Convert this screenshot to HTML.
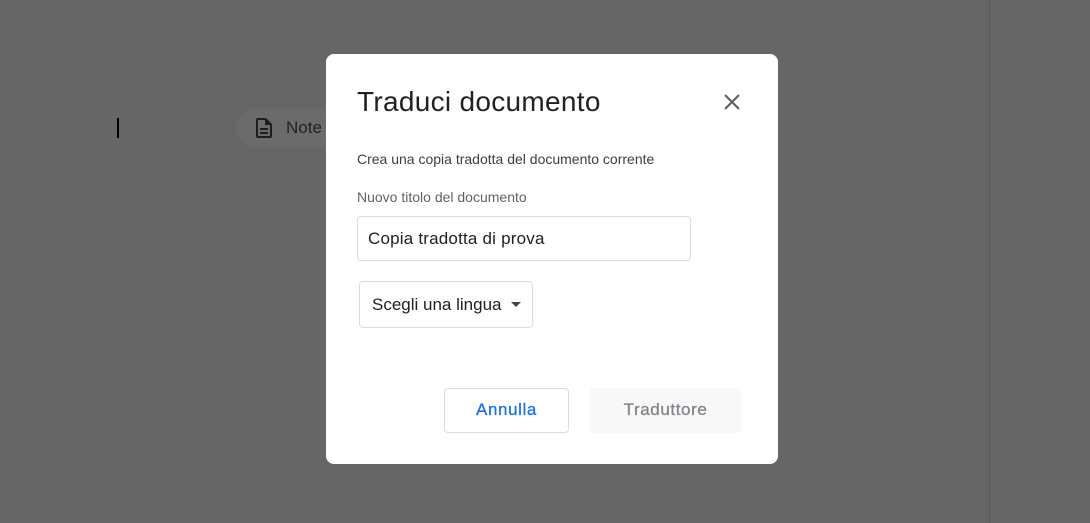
<!DOCTYPE html>
<html><head><style>
body{margin:0;width:1090px;height:523px;background:#666;position:relative;overflow:hidden;font-family:"Liberation Sans",Arial,sans-serif}
.a{position:absolute}
</style></head><body>
<div class="a" style="left:989px;top:0;width:1px;height:523px;background:#5a5a5a"></div>
<div class="a" style="left:117px;top:118px;width:2px;height:20px;background:#000"></div>
<div class="a" style="left:236px;top:108px;width:120px;height:40px;border-radius:20px;background:#6b6b6b"></div>
<svg class="a" style="left:252px;top:116px" width="24" height="24" viewBox="0 0 24 24"><path d="M14 2H6c-1.1 0-2 .9-2 2v16c0 1.1.9 2 2 2h12c1.1 0 2-.9 2-2V8l-6-6zm4 18H6V4h7v5h5v11zM8 12h8v2H8zm0 4h8v2H8z" fill="#1e1e1e"/></svg>
<div class="a" style="left:286px;top:118px;font-size:17px;color:#222">Note</div>
<div class="a" style="left:326px;top:54px;width:452px;height:410px;background:#fff;border-radius:8px"></div>
<div class="a" style="left:357px;top:86px;font-size:28px;letter-spacing:0.3px;color:#202124">Traduci documento</div>
<svg class="a" style="left:720px;top:90px" width="24" height="24" viewBox="0 0 24 24"><path d="M5 5L19 19M19 5L5 19" stroke="#5f6368" stroke-width="2.2"/></svg>
<div class="a" style="left:357px;top:151px;font-size:14px;color:#3c4043">Crea una copia tradotta del documento corrente</div>
<div class="a" style="left:357px;top:189px;font-size:14px;color:#5f6368">Nuovo titolo del documento</div>
<div class="a" style="left:357px;top:216px;width:332px;height:43px;border:1px solid #dadce0;border-radius:4px"></div>
<div class="a" style="left:368px;top:229px;font-size:17px;letter-spacing:0.2px;color:#202124">Copia tradotta di prova</div>
<div class="a" style="left:359px;top:281px;width:172px;height:45px;border:1px solid #dadce0;border-radius:4px"></div>
<div class="a" style="left:372px;top:295px;font-size:17px;color:#202124">Scegli una lingua</div>
<div class="a" style="left:511px;top:302px;width:0;height:0;border-left:5px solid transparent;border-right:5px solid transparent;border-top:5px solid #444"></div>
<div class="a" style="left:444px;top:388px;width:123px;height:43px;border:1px solid #dadce0;border-radius:4px"></div>
<div class="a" style="left:444px;top:400px;width:125px;text-align:center;font-size:17px;letter-spacing:0.6px;color:#1a73e8;-webkit-text-stroke:0.3px #1a73e8">Annulla</div>
<div class="a" style="left:590px;top:388px;width:151px;height:45px;background:#f8f8f8;border-radius:4px"></div>
<div class="a" style="left:590px;top:400px;width:151px;text-align:center;font-size:17px;letter-spacing:0.6px;color:#80868b;-webkit-text-stroke:0.3px #80868b">Traduttore</div>
</body></html>
